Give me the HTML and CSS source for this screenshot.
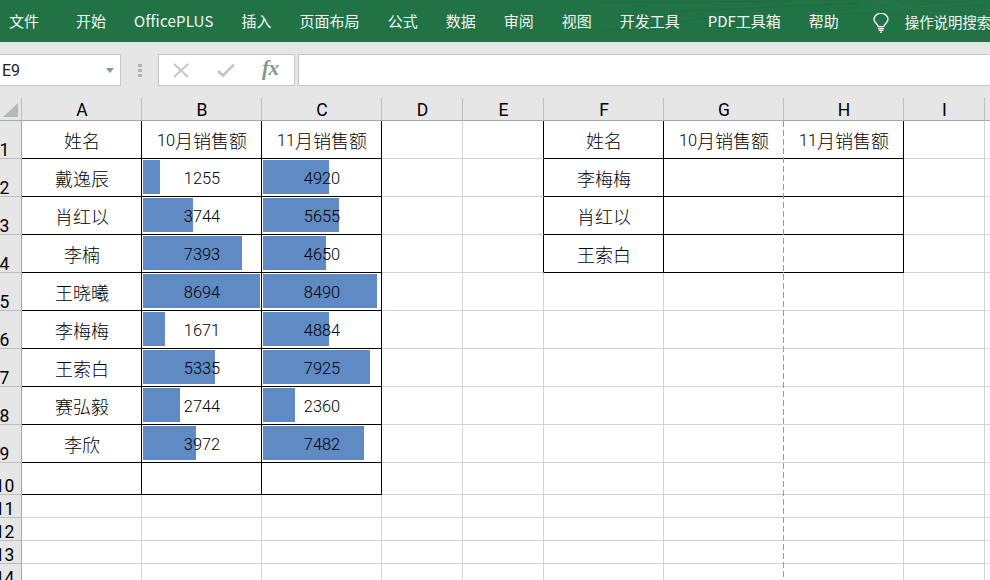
FILE: index.html
```html
<!DOCTYPE html>
<html lang="zh">
<head>
<meta charset="utf-8">
<title>Excel</title>
<link rel="stylesheet" href="styles.css">
</head>
<body>
<header class="ribbon">
  <svg class="ribbon-art" viewBox="0 0 430 42" width="430" height="42" aria-hidden="true">
    <path class="art-dark" d="M40 3 L230 1 M45 31 L190 13 M110 12 L300 3" />
    <path class="art-light" d="M250 14 L430 2 M310 0 L420 22" />
  </svg>
  <nav class="tabs">
    <span class="tab tab-first">文件</span>
    <span class="tab">开始</span>
    <span class="tab tab-latin">OfficePLUS</span>
    <span class="tab">插入</span>
    <span class="tab">页面布局</span>
    <span class="tab">公式</span>
    <span class="tab">数据</span>
    <span class="tab">审阅</span>
    <span class="tab">视图</span>
    <span class="tab">开发工具</span>
    <span class="tab">PDF工具箱</span>
    <span class="tab">帮助</span>
    <span class="search">
      <svg class="bulb" viewBox="0 0 18 20" width="18" height="20" aria-hidden="true">
        <path d="M6.2 13.6 C6 11 2 9.6 2 6.6 A7 6.4 0 0 1 16 6.6 C16 9.6 12 11 11.8 13.6 Z" fill="none" stroke="#fff" stroke-width="1.3"/>
        <path d="M6 15.6 H12 M6.6 17.4 H11.4 M8 19.2 H10" fill="none" stroke="#fff" stroke-width="1.2"/>
      </svg>
      <span>操作说明搜索</span>
    </span>
  </nav>
</header>
<section class="formula-band">
  <div class="namebox"><span class="name">E9</span><span class="caret"></span></div>
  <div class="grip"><i></i><i></i><i></i></div>
  <div class="fx-box">
    <svg viewBox="0 0 16 15" width="16" height="15" aria-hidden="true"><path d="M1 1 L15 14 M15 1 L1 14" fill="none" stroke="#c8c8c8" stroke-width="2.2"/></svg>
    <svg viewBox="0 0 18 14" width="18" height="14" aria-hidden="true"><path d="M1 8 L6 12.5 L17 1.5" fill="none" stroke="#c8c8c8" stroke-width="3"/></svg>
    <span class="fx">fx</span>
  </div>
  <div class="formula"></div>
</section>
<main class="sheet">
  <div class="corner"></div>
  <div class="ch">A</div><div class="ch">B</div><div class="ch">C</div><div class="ch">D</div><div class="ch">E</div><div class="ch">F</div><div class="ch">G</div><div class="ch">H</div><div class="ch">I</div><div class="ch"></div>

  <div class="rh">1</div>
  <div class="c b">姓名</div><div class="c b"><span class="n">10</span>月销售额</div><div class="c b"><span class="n">11</span>月销售额</div>
  <div class="c"></div><div class="c br"></div>
  <div class="c b">姓名</div><div class="c b gap"><span class="n">10</span>月销售额</div><div class="c b"><span class="n">11</span>月销售额</div>
  <div class="c"></div><div class="c"></div>

  <div class="rh">2</div>
  <div class="c b">戴逸辰</div><div class="c b bar" style="--w:17px"><span class="n">1255</span></div><div class="c b bar" style="--w:66px"><span class="n">4920</span></div>
  <div class="c"></div><div class="c br"></div>
  <div class="c b">李梅梅</div><div class="c b gap"></div><div class="c b"></div>
  <div class="c"></div><div class="c"></div>

  <div class="rh">3</div>
  <div class="c b">肖红以</div><div class="c b bar" style="--w:50px"><span class="n">3744</span></div><div class="c b bar" style="--w:76px"><span class="n">5655</span></div>
  <div class="c"></div><div class="c br"></div>
  <div class="c b">肖红以</div><div class="c b gap"></div><div class="c b"></div>
  <div class="c"></div><div class="c"></div>

  <div class="rh">4</div>
  <div class="c b">李楠</div><div class="c b bar" style="--w:99px"><span class="n">7393</span></div><div class="c b bar" style="--w:63px"><span class="n">4650</span></div>
  <div class="c"></div><div class="c br"></div>
  <div class="c b">王索白</div><div class="c b gap"></div><div class="c b"></div>
  <div class="c"></div><div class="c"></div>

  <div class="rh">5</div>
  <div class="c b">王晓曦</div><div class="c b bar" style="--w:117px"><span class="n">8694</span></div><div class="c b bar" style="--w:114px"><span class="n">8490</span></div>
  <div class="c"></div><div class="c"></div><div class="c"></div><div class="c gap"></div><div class="c"></div><div class="c"></div><div class="c"></div>

  <div class="rh">6</div>
  <div class="c b">李梅梅</div><div class="c b bar" style="--w:22px"><span class="n">1671</span></div><div class="c b bar" style="--w:66px"><span class="n">4884</span></div>
  <div class="c"></div><div class="c"></div><div class="c"></div><div class="c gap"></div><div class="c"></div><div class="c"></div><div class="c"></div>

  <div class="rh">7</div>
  <div class="c b">王索白</div><div class="c b bar" style="--w:72px"><span class="n">5335</span></div><div class="c b bar" style="--w:107px"><span class="n">7925</span></div>
  <div class="c"></div><div class="c"></div><div class="c"></div><div class="c gap"></div><div class="c"></div><div class="c"></div><div class="c"></div>

  <div class="rh">8</div>
  <div class="c b">赛弘毅</div><div class="c b bar" style="--w:37px"><span class="n">2744</span></div><div class="c b bar" style="--w:32px"><span class="n">2360</span></div>
  <div class="c"></div><div class="c"></div><div class="c"></div><div class="c gap"></div><div class="c"></div><div class="c"></div><div class="c"></div>

  <div class="rh">9</div>
  <div class="c b">李欣</div><div class="c b bar" style="--w:53px"><span class="n">3972</span></div><div class="c b bar" style="--w:101px"><span class="n">7482</span></div>
  <div class="c"></div><div class="c"></div><div class="c"></div><div class="c gap"></div><div class="c"></div><div class="c"></div><div class="c"></div>

  <div class="rh">10</div>
  <div class="c b"></div><div class="c b"></div><div class="c b"></div>
  <div class="c"></div><div class="c"></div><div class="c"></div><div class="c gap"></div><div class="c"></div><div class="c"></div><div class="c"></div>

  <div class="rh">11</div>
  <div class="c"></div><div class="c"></div><div class="c"></div><div class="c"></div><div class="c"></div><div class="c"></div><div class="c gap"></div><div class="c"></div><div class="c"></div><div class="c"></div>

  <div class="rh">12</div>
  <div class="c"></div><div class="c"></div><div class="c"></div><div class="c"></div><div class="c"></div><div class="c"></div><div class="c gap"></div><div class="c"></div><div class="c"></div><div class="c"></div>

  <div class="rh">13</div>
  <div class="c"></div><div class="c"></div><div class="c"></div><div class="c"></div><div class="c"></div><div class="c"></div><div class="c gap"></div><div class="c"></div><div class="c"></div><div class="c"></div>

  <div class="rh">14</div>
  <div class="c"></div><div class="c"></div><div class="c"></div><div class="c"></div><div class="c"></div><div class="c"></div><div class="c gap"></div><div class="c"></div><div class="c"></div><div class="c"></div>

  <div class="page-break"></div>
</main>
</body>
</html>
```
FILE: styles.css
```css
* { box-sizing: border-box; }
html, body { margin: 0; height: 100%; }
body {
  width: 990px;
  height: 580px;
  overflow: hidden;
  background: #fff;
  font-family: "Noto Sans CJK SC", "Liberation Sans", sans-serif;
  color: #000;
}
.ribbon {
  height: 42px;
  background: #217346;
  position: relative;
  color: #f2f7f4;
}
.ribbon-art { position: absolute; right: 0; top: 0; }
.ribbon-art path { fill: none; stroke-width: 1; }
.art-dark { stroke: #1f6a41; }
.art-light { stroke: #287a4e; }
.tabs {
  position: relative;
  display: flex;
  align-items: center;
  gap: 28px;
  height: 42px;
  padding-left: 9px;
  font-size: 15px;
  white-space: nowrap;
}
.tab-first { margin-right: 9px; }
.tab { line-height: 42px; }
.tab-latin { letter-spacing: 0.22px; }
.search { display: flex; align-items: center; gap: 15px; margin-left: 5px; font-size: 14.4px; }
.bulb { display: block; margin-top: 3px; }
.formula-band {
  height: 56px;
  background: #e6e6e6;
  display: flex;
  align-items: flex-start;
  padding-top: 12px;
}
.namebox {
  width: 122px;
  height: 32px;
  margin-left: -1px;
  background: #fff;
  border: 1px solid #c6c6c6;
  display: flex;
  align-items: center;
  justify-content: space-between;
  padding: 0 6px 0 2px;
  font-size: 16px;
  font-family: "Roboto", "Liberation Sans", sans-serif;
  color: #222;
}
.caret {
  width: 0;
  height: 0;
  border-left: 4px solid transparent;
  border-right: 4px solid transparent;
  border-top: 5px solid #7f9f8d;
}
.grip {
  width: 37px;
  height: 32px;
  padding-left: 1px;
  display: flex;
  flex-direction: column;
  align-items: center;
  justify-content: center;
  gap: 2px;
}
.grip i { width: 4px; height: 3px; background: #b4b4b4; display: block; }
.fx-box {
  width: 137px;
  height: 32px;
  background: #fff;
  border: 1px solid #c6c6c6;
  display: flex;
  align-items: center;
  gap: 28px;
  padding-left: 14px;
}
.fx {
  font-family: "Liberation Serif", serif;
  font-style: italic;
  font-weight: 700;
  font-size: 21px;
  letter-spacing: -0.5px;
  color: #7f9a8b;
  line-height: 1;
  margin-left: -1px;
  margin-top: -3px;
}
.formula {
  flex: 1;
  height: 32px;
  margin-left: 3px;
  background: #fff;
  border: 1px solid #c6c6c6;
  border-right: 0;
}
.sheet {
  position: relative;
  display: grid;
  grid-template-columns: 22px 120px 120px 120px 81px 81px 120px 120px 120px 81px 6px;
  grid-template-rows: 23px repeat(9, 38px) 32px 23px 23px 23px 23px;
}
.c {
  border-right: 1px solid #d4d4d4;
  border-bottom: 1px solid #d4d4d4;
  display: flex;
  align-items: center;
  justify-content: center;
  padding-left: 1px;
  font-size: 18px;
  font-weight: 300;
  white-space: nowrap;
}
.bar {
  background-image: linear-gradient(#5f8ac3, #5f8ac3);
  background-repeat: no-repeat;
  background-position: 1px 1px;
  background-size: var(--w) 34px;
}
.n {
  font-family: "Roboto", "Liberation Sans", sans-serif;
  font-size: 16.4px;
  font-weight: 300;
  padding-top: 1px;
}
.ch, .corner, .rh {
  background-color: #e6e6e6;
  font-family: "Roboto", "Liberation Sans", sans-serif;
  font-size: 17.5px;
  display: flex;
  justify-content: center;
  white-space: nowrap;
}
.ch, .corner {
  border-right: 1px solid #bdbdbd;
  border-bottom: 1px solid #a6a6a6;
}
.ch { align-items: center; padding-left: 1px; padding-top: 2px; }
.corner { position: relative; }
.corner::after {
  content: "";
  position: absolute;
  right: 3px;
  bottom: 3px;
  width: 0;
  height: 0;
  border-left: 15px solid transparent;
  border-bottom: 14px solid #b5b9b5;
}
.rh {
  border-right: 1px solid #a6a6a6;
  border-bottom: 1px solid #bdbdbd;
  padding-right: 12px;
  align-items: flex-end;
  line-height: 16px;
}
.b { border-right-color: #000; border-bottom-color: #000; }
.br { border-right-color: #000; }
.gap { border-right-color: #fff; }
.page-break {
  position: absolute;
  grid-column: 9;
  grid-row: 2 / -1;
  left: -1px;
  top: 0;
  bottom: 0;
  width: 1px;
  background: repeating-linear-gradient(to bottom, #9a9a9a 0 6px, transparent 6px 9px);
}
```
